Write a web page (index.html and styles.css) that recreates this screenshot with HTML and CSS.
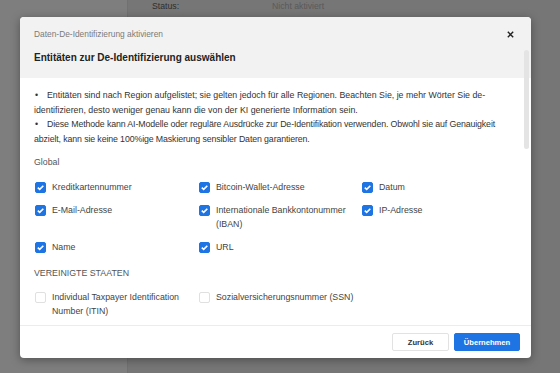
FILE: index.html
```html
<!DOCTYPE html>
<html lang="de">
<head>
<meta charset="utf-8">
<link rel="stylesheet" href="styles.css">
</head>
<body>
<div class="page">
  <aside class="sidebar"></aside>
  <main class="main">
    <div class="status-row">
      <span class="status-label">Status:</span>
      <span class="status-value">Nicht aktiviert</span>
    </div>
  </main>
</div>

<div class="modal">
  <div class="modal-head">
    <div class="title-row">
      <span class="title">Daten-De-Identifizierung aktivieren</span>
      <svg class="close" width="7" height="7" viewBox="0 0 7 7"><path d="M0.8 0.8L6.2 6.2M6.2 0.8L0.8 6.2" stroke="#222" stroke-width="1.4"/></svg>
    </div>
    <div class="subtitle">Entitäten zur De-Identifizierung auswählen</div>
  </div>
  <div class="modal-body">
    <p class="note">Entitäten sind nach Region aufgelistet; sie gelten jedoch für alle Regionen. Beachten Sie, je mehr Wörter Sie de-identifizieren, desto weniger genau kann die von der KI generierte Information sein.</p>
    <p class="note note-tight">Diese Methode kann AI-Modelle oder reguläre Ausdrücke zur De-Identifikation verwenden. Obwohl sie auf Genauigkeit abzielt, kann sie keine 100%ige Maskierung sensibler Daten garantieren.</p>

    <div class="region">Global</div>
    <div class="grid">
      <label class="item"><span class="cb on"><svg viewBox="0 0 11 11"><path d="M2.8 5.6L4.7 7.4L8.3 3.7" fill="none" stroke="#fff" stroke-width="1.6"/></svg></span><span>Kreditkartennummer</span></label>
      <label class="item"><span class="cb on"><svg viewBox="0 0 11 11"><path d="M2.8 5.6L4.7 7.4L8.3 3.7" fill="none" stroke="#fff" stroke-width="1.6"/></svg></span><span>Bitcoin-Wallet-Adresse</span></label>
      <label class="item"><span class="cb on"><svg viewBox="0 0 11 11"><path d="M2.8 5.6L4.7 7.4L8.3 3.7" fill="none" stroke="#fff" stroke-width="1.6"/></svg></span><span>Datum</span></label>
      <label class="item"><span class="cb on"><svg viewBox="0 0 11 11"><path d="M2.8 5.6L4.7 7.4L8.3 3.7" fill="none" stroke="#fff" stroke-width="1.6"/></svg></span><span>E-Mail-Adresse</span></label>
      <label class="item"><span class="cb on"><svg viewBox="0 0 11 11"><path d="M2.8 5.6L4.7 7.4L8.3 3.7" fill="none" stroke="#fff" stroke-width="1.6"/></svg></span><span>Internationale Bankkontonummer (IBAN)</span></label>
      <label class="item"><span class="cb on"><svg viewBox="0 0 11 11"><path d="M2.8 5.6L4.7 7.4L8.3 3.7" fill="none" stroke="#fff" stroke-width="1.6"/></svg></span><span>IP-Adresse</span></label>
      <label class="item"><span class="cb on"><svg viewBox="0 0 11 11"><path d="M2.8 5.6L4.7 7.4L8.3 3.7" fill="none" stroke="#fff" stroke-width="1.6"/></svg></span><span>Name</span></label>
      <label class="item"><span class="cb on"><svg viewBox="0 0 11 11"><path d="M2.8 5.6L4.7 7.4L8.3 3.7" fill="none" stroke="#fff" stroke-width="1.6"/></svg></span><span>URL</span></label>
    </div>

    <div class="region region-us">VEREINIGTE STAATEN</div>
    <div class="grid">
      <label class="item"><span class="cb"></span><span>Individual Taxpayer Identification Number (ITIN)</span></label>
      <label class="item"><span class="cb"></span><span>Sozialversicherungsnummer (SSN)</span></label>
    </div>
  </div>
  <div class="modal-foot">
    <button class="btn btn-back">Zurück</button>
    <button class="btn btn-apply">Übernehmen</button>
  </div>
  <div class="scroll-thumb"></div>
</div>
</body>
</html>
```

FILE: styles.css
```css
* { box-sizing: border-box; }
html, body { margin: 0; padding: 0; }
body {
  width: 560px;
  height: 373px;
  overflow: hidden;
  font-family: "Liberation Sans", Arial, sans-serif;
  background: #767676;
}
.page {
  display: flex;
  height: 373px;
}
.sidebar {
  width: 128px;
  background: #7e7e7e;
  border-right: 1px solid #717171;
}
.main {
  flex: 1;
  background: #767676;
  padding-left: 24px;
}
.status-row {
  display: flex;
  font-size: 8.7px;
  line-height: 13px;
}
.status-label { color: #2e2e2e; width: 120px; }
.status-value { color: #5a5a5a; }

.modal {
  position: absolute;
  left: 20px;
  top: 17px;
  width: 511px;
  height: 341px;
  background: #fff;
  border-radius: 4px;
  box-shadow: 0 2px 10px rgba(0,0,0,0.35);
  display: flex;
  flex-direction: column;
  overflow: hidden;
}
.modal-head {
  background: #f2f2f2;
  padding: 10px 14px 13px 14px;
}
.title-row {
  display: flex;
  justify-content: space-between;
  align-items: center;
  height: 14px;
}
.title {
  font-size: 8.4px;
  color: #7a7a7a;
}
.close { margin-right: 3px; }
.subtitle {
  margin-top: 10px;
  font-size: 10px;
  line-height: 14px;
  font-weight: bold;
  color: #222;
}
.modal-body {
  flex: 1;
  overflow: hidden;
  padding: 10px 14px 0 14px;
}
.note {
  margin: 0;
  font-size: 8.8px;
  line-height: 14.5px;
  color: #333;
  padding-right: 12px;
}
.note-tight {
  padding-right: 0;
  letter-spacing: -0.12px;
}
.note::before {
  content: "•";
  display: inline-block;
  width: 12px;
  padding-left: 1px;
}
.region {
  margin-top: 9px;
  font-size: 8.8px;
  line-height: 14px;
  color: #555;
}
.region-us { margin-top: 12px; }
.grid {
  margin-top: 11px;
  display: grid;
  grid-template-columns: 164px 163px 150px;
  row-gap: 9px;
}
.region-us + .grid { margin-top: 10px; }
.item {
  display: flex;
  align-items: flex-start;
  gap: 6px;
  font-size: 8.8px;
  line-height: 14px;
  color: #444;
  padding-left: 1px;
  padding-right: 2px;
}
.cb {
  flex: none;
  width: 11px;
  height: 11px;
  margin-top: 1.5px;
  border-radius: 2px;
  border: 1px solid #e0e0e0;
  background: #fff;
  display: flex;
}
.cb.on {
  background: #1f74e3;
  border-color: #1f74e3;
}
.cb svg { width: 11px; height: 11px; margin: -1px; }

.modal-foot {
  border-top: 1px solid #ececec;
  height: 33px;
  display: flex;
  justify-content: flex-end;
  align-items: center;
  gap: 5px;
  padding-right: 11px;
}
.btn {
  height: 18px;
  font-family: "Liberation Sans", Arial, sans-serif;
  font-size: 7.6px;
  font-weight: bold;
  border-radius: 2px;
  cursor: pointer;
}
.btn-back {
  width: 57px;
  background: #fff;
  border: 1px solid #e2e2e2;
  color: #333;
}
.btn-apply {
  width: 66px;
  background: #1f74e3;
  border: 1px solid #1f74e3;
  color: #fff;
}
.scroll-thumb {
  position: absolute;
  right: 2px;
  top: 33px;
  width: 5px;
  height: 99px;
  border-radius: 3px;
  background: #e4e4e4;
}
```
